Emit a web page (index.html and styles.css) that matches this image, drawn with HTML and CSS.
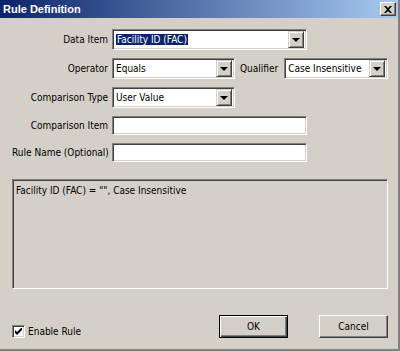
FILE: index.html
```html
<!DOCTYPE html>
<html lang="en">
<head>
    <meta charset="UTF-8">
    <title>Rule Definition</title>
    <link rel="stylesheet" href="styles.css">
</head>
<body>
    <div class="dialog">
        <div class="titlebar">
            <span class="title">Rule Definition</span>
            <span class="close-btn">
                <svg width="8" height="7" viewBox="0 0 8 7"><path d="M0 0h2l2 2 2-2h2L5 3.5 8 7H6L4 5 2 7H0l3-3.5z" fill="#000"/></svg>
            </span>
        </div>

        <div class="content">
            <div class="form">
                <label class="label">Data Item</label>
                <div class="combo combo-wide">
                    <span class="combo-value"><span class="selected-text">Facility ID (FAC)</span></span>
                    <span class="drop-btn"><span class="arrow"></span></span>
                </div>

                <label class="label">Operator</label>
                <div class="row-inline">
                    <div class="combo combo-op">
                        <span class="combo-value">Equals</span>
                        <span class="drop-btn"><span class="arrow"></span></span>
                    </div>
                    <label class="label inline-label">Qualifier</label>
                    <div class="combo combo-qual">
                        <span class="combo-value">Case Insensitive</span>
                        <span class="drop-btn"><span class="arrow"></span></span>
                    </div>
                </div>

                <label class="label">Comparison Type</label>
                <div class="combo combo-op">
                    <span class="combo-value">User Value</span>
                    <span class="drop-btn"><span class="arrow"></span></span>
                </div>

                <label class="label">Comparison Item</label>
                <div class="textbox"></div>

                <label class="label">Rule Name (Optional)</label>
                <div class="textbox"></div>
            </div>

            <div class="summary">Facility ID (FAC) = "", Case Insensitive</div>

            <div class="footer">
                <label class="check">
                    <span class="check-box">
                        <svg width="7" height="7" viewBox="0 0 7 7"><path d="M0 2v3l2 2 5-5V-1L2 4z" fill="#000"/></svg>
                    </span>
                    Enable Rule
                </label>
                <div class="buttons">
                    <button class="btn btn-default">OK</button>
                    <button class="btn">Cancel</button>
                </div>
            </div>
        </div>
    </div>
</body>
</html>
```

FILE: styles.css
```css
body {
    margin: 0;
    background-color: #d4d0c8;
    font-family: 'DejaVu Sans Condensed', 'Liberation Sans', Arial, sans-serif;
    font-size: 10px;
    color: #000;
}

.dialog {
    width: 400px;
    height: 351px;
    box-sizing: border-box;
    border-right: 2px solid #808080;
    border-bottom: 2px solid #808080;
    display: flex;
    flex-direction: column;
}

.titlebar {
    height: 18px;
    background: linear-gradient(to right, #0a246a, #a6caf0);
    display: flex;
    align-items: center;
    justify-content: space-between;
    padding: 0 2px 0 3px;
}

.title {
    color: #fff;
    font-family: 'Liberation Sans', Arial, sans-serif;
    font-weight: bold;
    font-size: 11px;
}

.close-btn {
    width: 16px;
    height: 14px;
    box-sizing: border-box;
    background-color: #d4d0c8;
    border: 1px solid;
    border-color: #fff #404040 #404040 #fff;
    box-shadow: inset -1px -1px #808080;
    display: flex;
    align-items: center;
    justify-content: center;
}

.content {
    flex: 1;
    display: flex;
    flex-direction: column;
    padding: 11px 10px 0 12px;
}

.form {
    display: grid;
    grid-template-columns: 96px auto;
    grid-template-rows: 21px 21px 21px 19px 19px;
    column-gap: 4px;
    row-gap: 8px;
    align-items: center;
}

.label {
    text-align: right;
    white-space: nowrap;
}

.row-inline {
    display: flex;
    align-items: center;
}

.inline-label {
    margin: 0 6px 0 5px;
}

/* sunken field border */
.combo,
.textbox,
.summary {
    box-sizing: border-box;
    border: 1px solid;
    border-color: #808080 #fff #fff #808080;
    box-shadow: inset 1px 1px #404040, inset -1px -1px #d4d0c8;
}

.combo {
    height: 21px;
    background-color: #fff;
    display: flex;
    align-items: center;
    padding: 2px;
}

.combo-wide { width: 195px; }
.combo-op { width: 123px; }
.combo-qual { width: 104px; }

.combo-value {
    flex: 1;
    padding-left: 1px;
    white-space: nowrap;
    overflow: hidden;
}

.selected-text {
    background-color: #0a246a;
    color: #fff;
    outline: 1px dotted #fff;
    padding: 1px 1px 2px;
}

.drop-btn {
    width: 16px;
    height: 17px;
    box-sizing: border-box;
    background-color: #d4d0c8;
    border: 1px solid;
    border-color: #d4d0c8 #404040 #404040 #d4d0c8;
    box-shadow: inset 1px 1px #fff, inset -1px -1px #808080;
    display: flex;
    align-items: center;
    justify-content: center;
}

.arrow {
    width: 0;
    height: 0;
    border-left: 4px solid transparent;
    border-right: 4px solid transparent;
    border-top: 4px solid #000;
    margin-top: 1px;
}

.textbox {
    width: 195px;
    height: 19px;
    background-color: #fff;
}

.summary {
    margin-top: 17px;
    height: 110px;
    padding: 5px 3px;
    background-color: #d4d0c8;
}

.footer {
    display: flex;
    align-items: center;
    justify-content: space-between;
    margin-top: 26px;
}

.check {
    display: flex;
    align-items: center;
    gap: 3px;
    margin-top: 9px;
}

.check-box {
    width: 13px;
    height: 13px;
    box-sizing: border-box;
    background-color: #fff;
    border: 1px solid;
    border-color: #808080 #fff #fff #808080;
    box-shadow: inset 1px 1px #404040, inset -1px -1px #d4d0c8;
    display: flex;
    align-items: center;
    justify-content: center;
}

.buttons {
    display: flex;
    gap: 31px;
}

.btn {
    width: 69px;
    height: 23px;
    box-sizing: border-box;
    background-color: #d4d0c8;
    font-family: inherit;
    font-size: 10px;
    color: #000;
    border: 1px solid;
    border-color: #fff #404040 #404040 #fff;
    box-shadow: inset -1px -1px #808080;
    padding: 0;
}

.btn-default {
    border: 1px solid #000;
    box-shadow: inset 1px 1px #fff, inset -1px -1px #404040, inset -2px -2px #808080;
}
```
